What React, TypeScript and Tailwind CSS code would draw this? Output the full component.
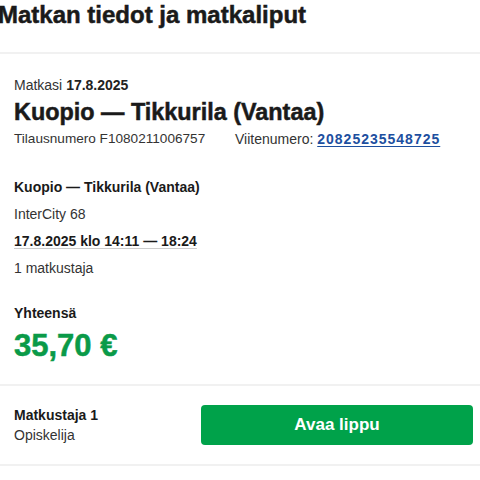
export default function App() {
  return (
    <div className="h-[480px] w-[480px] overflow-hidden bg-white font-['Liberation_Sans',Arial,sans-serif] text-[#222]">
      <div className="h-[52px] pt-[2px]">
        <h1 className="-ml-[2px] text-[24px] font-bold leading-[26px] text-[#1a1a1a] [-webkit-text-stroke:0.5px_#1a1a1a]">
          Matkan tiedot ja matkaliput
        </h1>
      </div>
      <div className="h-[2px] bg-[#f1f1f1]" />

      <div className="px-[14px] pt-[22px]">
        <p className="text-[14px] leading-[18px] text-[#333]">
          Matkasi <span className="font-bold text-[#222]">17.8.2025</span>
        </p>
        <h2 className="mt-[4px] text-[23.4px] font-bold leading-[28px] text-[#1a1a1a] [-webkit-text-stroke:0.5px_#1a1a1a]">
          Kuopio — Tikkurila (Vantaa)
        </h2>
        <div className="mt-[4px] flex text-[14px] leading-[18px] text-[#333]">
          <span className="w-[221px] text-[13.6px]">Tilausnumero F1080211006757</span>
          <span>
            Viitenumero:{" "}
            <a href="#" className="font-bold tracking-[1px] text-[#1d4f9f] underline underline-offset-2">
              20825235548725
            </a>
          </span>
        </div>

        <div className="mt-[30px] flex flex-col gap-[9px] text-[14px] leading-[18px]">
          <p className="font-bold text-[#1a1a1a]">Kuopio — Tikkurila (Vantaa)</p>
          <p className="text-[#333]">InterCity 68</p>
          <p className="font-bold text-[#1a1a1a] underline decoration-[#ccc] underline-offset-2">
            17.8.2025 klo 14:11 — 18:24
          </p>
          <p className="text-[#333]">1 matkustaja</p>
        </div>

        <p className="mt-[27px] text-[14px] font-bold leading-[18px] text-[#1a1a1a]">Yhteensä</p>
        <p className="mt-[6px] text-[31px] font-bold leading-[36px] text-[#0a9a48] [-webkit-text-stroke:0.5px_#0a9a48]">
          35,70 €
        </p>
      </div>

      <div className="mt-[20px] h-[2px] bg-[#f1f1f1]" />

      <div className="flex h-[78px] items-center pl-[14px] pr-[7px]">
        <div className="flex-1 text-[14px] leading-[20px]">
          <p className="font-bold text-[#1a1a1a]">Matkustaja 1</p>
          <p className="text-[#333]">Opiskelija</p>
        </div>
        <button className="flex h-[40px] w-[272px] items-center justify-center rounded-[4px] bg-[#00a24a] text-[17px] font-bold text-white">
          Avaa lippu
        </button>
      </div>
      <div className="h-[2px] bg-[#f1f1f1]" />
    </div>
  );
}
